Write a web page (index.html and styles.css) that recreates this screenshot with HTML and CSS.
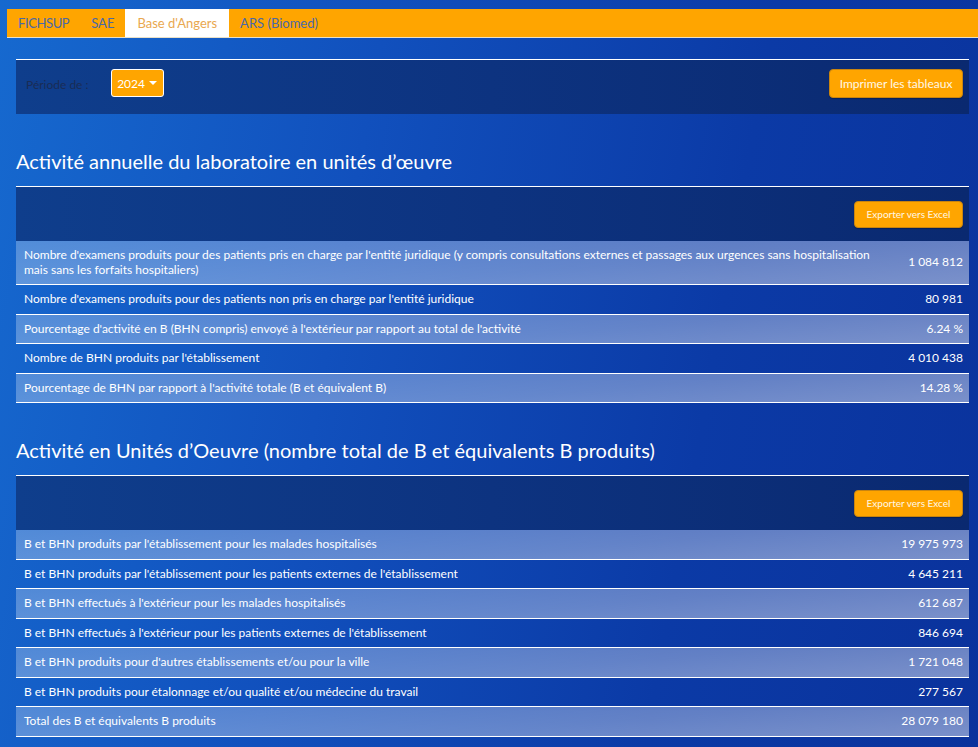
FILE: index.html
```html
<!DOCTYPE html>
<html lang="fr">
<head>
<meta charset="utf-8">
<title>Base d'Angers</title>
<link rel="stylesheet" href="styles.css">
</head>
<body>
<nav class="tabs">
  <a class="tab">FICHSUP</a>
  <a class="tab">SAE</a>
  <a class="tab active">Base d'Angers</a>
  <a class="tab">ARS (Biomed)</a>
</nav>
<main class="content">
  <section class="filter">
    <div class="filter-left">
      <span class="filter-label">Période de :</span>
      <button class="select">2024 <span class="caret"></span></button>
    </div>
    <button class="btn btn-print">Imprimer les tableaux</button>
  </section>

  <h2 class="title">Activité annuelle du laboratoire en unités d’œuvre</h2>
  <section class="table">
    <div class="table-head"><button class="btn btn-export">Exporter vers Excel</button></div>
    <div class="row"><span class="label">Nombre d'examens produits pour des patients pris en charge par l'entité juridique (y compris consultations externes et passages aux urgences sans hospitalisation mais sans les forfaits hospitaliers)</span><span class="value">1 084 812</span></div>
    <div class="row"><span class="label">Nombre d'examens produits pour des patients non pris en charge par l'entité juridique</span><span class="value">80 981</span></div>
    <div class="row"><span class="label">Pourcentage d'activité en B (BHN compris) envoyé à l'extérieur par rapport au total de l'activité</span><span class="value">6.24 %</span></div>
    <div class="row"><span class="label">Nombre de BHN produits par l'établissement</span><span class="value">4 010 438</span></div>
    <div class="row"><span class="label">Pourcentage de BHN par rapport à l'activité totale (B et équivalent B)</span><span class="value">14.28 %</span></div>
  </section>

  <h2 class="title">Activité en Unités d’Oeuvre (nombre total de B et équivalents B produits)</h2>
  <section class="table">
    <div class="table-head"><button class="btn btn-export">Exporter vers Excel</button></div>
    <div class="row"><span class="label">B et BHN produits par l'établissement pour les malades hospitalisés</span><span class="value">19 975 973</span></div>
    <div class="row"><span class="label">B et BHN produits par l'établissement pour les patients externes de l'établissement</span><span class="value">4 645 211</span></div>
    <div class="row"><span class="label">B et BHN effectués à l'extérieur pour les malades hospitalisés</span><span class="value">612 687</span></div>
    <div class="row"><span class="label">B et BHN effectués à l'extérieur pour les patients externes de l'établissement</span><span class="value">846 694</span></div>
    <div class="row"><span class="label">B et BHN produits pour d'autres établissements et/ou pour la ville</span><span class="value">1 721 048</span></div>
    <div class="row"><span class="label">B et BHN produits pour étalonnage et/ou qualité et/ou médecine du travail</span><span class="value">277 567</span></div>
    <div class="row"><span class="label">Total des B et équivalents B produits</span><span class="value">28 079 180</span></div>
  </section>
</main>
</body>
</html>
```
FILE: styles.css
```css
* { box-sizing: border-box; }
html, body { height: 100%; }
body {
  margin: 0;
  font-family: Lato, "Open Sans", sans-serif;
  color: #fff;
  background: linear-gradient(100deg, #1669cf 0%, #1150bd 35%, #0b3aa6 70%, #0a329c 100%);
  min-height: 747px;
  overflow: hidden;
}
.tabs {
  display: flex;
  margin: 9px 0 0 7px;
  height: 29px;
  background: #ffa500;
  border-bottom: 1px solid #e8e0c8;
}
.tab {
  display: flex;
  align-items: center;
  padding: 0 11px;
  font-size: 13px;
  color: #4a68a8;
}
.tab:first-child { letter-spacing: -0.4px; }
.tab.active {
  background: #fff;
  color: #e9a850;
  padding: 0 12px;
}
.content { padding: 0 9px 0 16px; }
.filter {
  margin-top: 21px;
  height: 55px;
  border-top: 1px solid #fff;
  background: linear-gradient(90deg, #0f3e8c 0%, #0d3380 50%, #0a2970 100%);
  display: flex;
  align-items: flex-start;
  justify-content: space-between;
  padding: 9px 6px 0 10px;
}
.filter-left { display: flex; align-items: center; gap: 22px; height: 28px; }
.filter-label { font-size: 12px; color: #1a2c55; padding-top: 3px; }
.select {
  font-family: inherit;
  height: 28px;
  width: 53px;
  border: 1px solid #fff;
  border-radius: 3px;
  background: #ffa500;
  color: #fff;
  font-size: 12px;
  display: flex;
  align-items: center;
  justify-content: center;
  gap: 4px;
  padding: 0;
}
.caret {
  width: 0; height: 0;
  border-left: 4px solid transparent;
  border-right: 4px solid transparent;
  border-top: 4px solid #fff;
}
.btn {
  font-family: inherit;
  background: #ffa500;
  color: #fff8e6;
  border: 1px solid #c88410;
  border-radius: 4px;
  box-shadow: 0 1px 1px rgba(0,0,0,.25);
}
.btn-print { height: 29px; width: 134px; font-size: 12px; }
.btn-export { height: 27px; width: 109px; font-size: 10px; }
.title {
  margin: 35px 0 13px;
  font-size: 20px;
  line-height: 24px;
  font-weight: 400;
}
.table { border-top: 1px solid #fff; }
.table-head {
  height: 54px;
  background: linear-gradient(90deg, #0f3e8c 0%, #0d3380 50%, #0a2970 100%);
  display: flex;
  align-items: center;
  justify-content: flex-end;
  padding-right: 6px;
}
.row {
  display: flex;
  align-items: center;
  justify-content: space-between;
  gap: 20px;
  padding: 7px 6px 7px 8px;
  font-size: 12px;
  line-height: 14.5px;
  border-bottom: 1px solid #fff;
}
.table .row:nth-child(even) {
  background: linear-gradient(175deg, rgba(255,255,255,.26) 0%, rgba(255,255,255,.36) 60%, rgba(255,255,255,.46) 100%);
}
.label { flex: 1; max-width: 856px; }
.value { white-space: nowrap; }
```
